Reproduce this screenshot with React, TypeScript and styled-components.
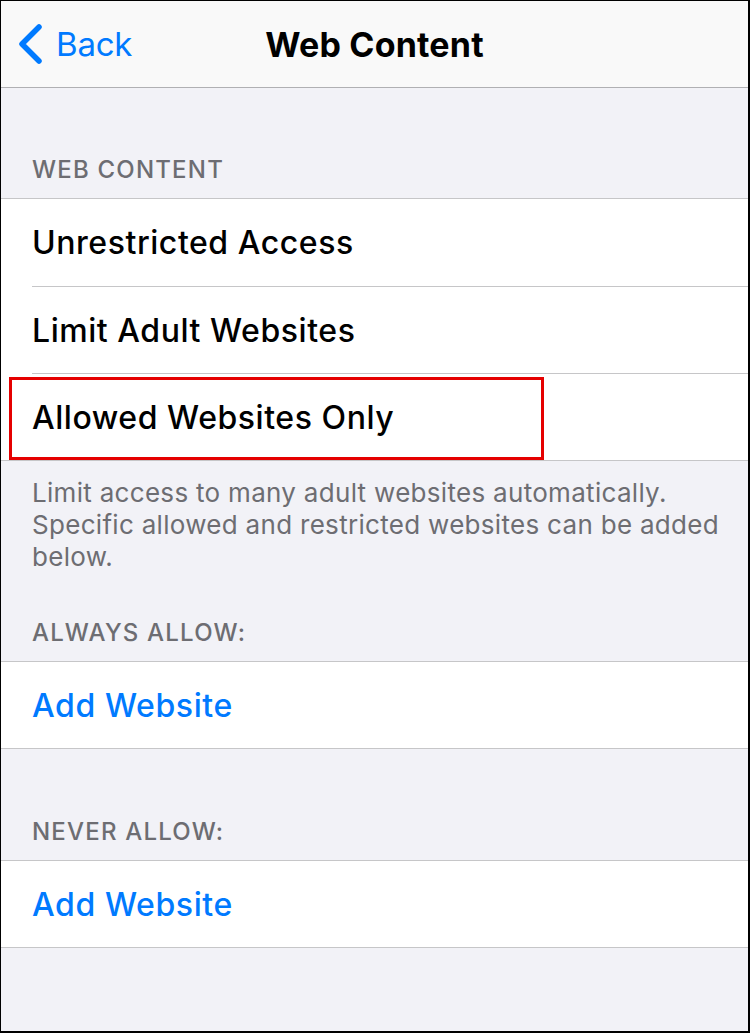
import React from "react";
import styled, { createGlobalStyle } from "styled-components";

const Global = createGlobalStyle`
  html, body { margin: 0; padding: 0; }
  body { font-family: Inter, "Noto Sans", sans-serif; -webkit-font-smoothing: antialiased; }
`;

const Frame = styled.div`
  width: 750px;
  height: 1033px;
  box-sizing: border-box;
  border-left: 1px solid #000;
  border-top: 1px solid #000;
  border-right: 2px solid #000;
  border-bottom: 2px solid #000;
  background: #f2f2f7;
  display: flex;
  flex-direction: column;
  overflow: hidden;
`;

const NavBar = styled.div`
  height: 86px;
  flex: none;
  background: #f9f9f9;
  border-bottom: 1px solid #b0b0b3;
  display: grid;
  grid-template-columns: 1fr auto 1fr;
  align-items: center;
`;

const BackButton = styled.div`
  display: flex;
  align-items: center;
  gap: 12px;
  padding-left: 17px;
  color: #007aff;
  font-size: 33px;
  letter-spacing: -0.2px;
`;

const Title = styled.div`
  font-weight: 700;
  font-size: 34px;
  color: #000;
  letter-spacing: 0.2px;
`;

const SectionHeader = styled.div<{ $height: number }>`
  height: ${(p) => p.$height}px;
  flex: none;
  box-sizing: border-box;
  padding: 0 31px 13px 31px;
  font-size: 24px;
  line-height: 30px;
  font-weight: 500;
  color: #6d6d72;
  letter-spacing: 1.2px;
  display: flex;
  align-items: flex-end;
`;

const Group = styled.div`
  flex: none;
  background: #fff;
  border-top: 1px solid #c6c6c8;
  border-bottom: 1px solid #c6c6c8;
`;

const Row = styled.div`
  position: relative;
  height: 87px;
  box-sizing: border-box;
  margin-left: 31px;
  display: flex;
  align-items: center;
  font-size: 32px;
  font-weight: 500;
  letter-spacing: 0.55px;
  color: #000;
  & + & {
    border-top: 1px solid #c6c6c8;
  }
`;

const LinkRow = styled(Row)`
  height: 86px;
  color: #007aff;
  letter-spacing: 0.6px;
`;

const Highlight = styled.div`
  position: absolute;
  left: -23px;
  top: 3px;
  width: 535px;
  height: 83px;
  box-sizing: border-box;
  border: 3px solid #e50000;
`;

const Footer = styled.div`
  flex: none;
  padding: 16px 14px 0 31px;
  height: 111px;
  box-sizing: border-box;
  font-size: 26px;
  line-height: 32px;
  color: #6d6d72;
  letter-spacing: 0.3px;
`;

const Chevron = () => (
  <svg width="26" height="40" viewBox="0 0 26 40">
    <path
      d="M21 3 L4 20 L21 37"
      fill="none"
      stroke="#007aff"
      strokeWidth="5.5"
      strokeLinecap="round"
      strokeLinejoin="round"
    />
  </svg>
);

export default function App() {
  return (
    <>
      <Global />
      <Frame>
        <NavBar>
          <BackButton>
            <Chevron />
            Back
          </BackButton>
          <Title>Web Content</Title>
          <div />
        </NavBar>
        <SectionHeader $height={110}>WEB CONTENT</SectionHeader>
        <Group>
          <Row>Unrestricted Access</Row>
          <Row>Limit Adult Websites</Row>
          <Row>
            Allowed Websites Only
            <Highlight />
          </Row>
        </Group>
        <Footer>
          Limit access to many adult websites automatically.<br />
          Specific allowed and restricted websites can be added below.
        </Footer>
        <SectionHeader $height={89}>ALWAYS ALLOW:</SectionHeader>
        <Group>
          <LinkRow>Add Website</LinkRow>
        </Group>
        <SectionHeader $height={111}>NEVER ALLOW:</SectionHeader>
        <Group>
          <LinkRow>Add Website</LinkRow>
        </Group>
      </Frame>
    </>
  );
}
